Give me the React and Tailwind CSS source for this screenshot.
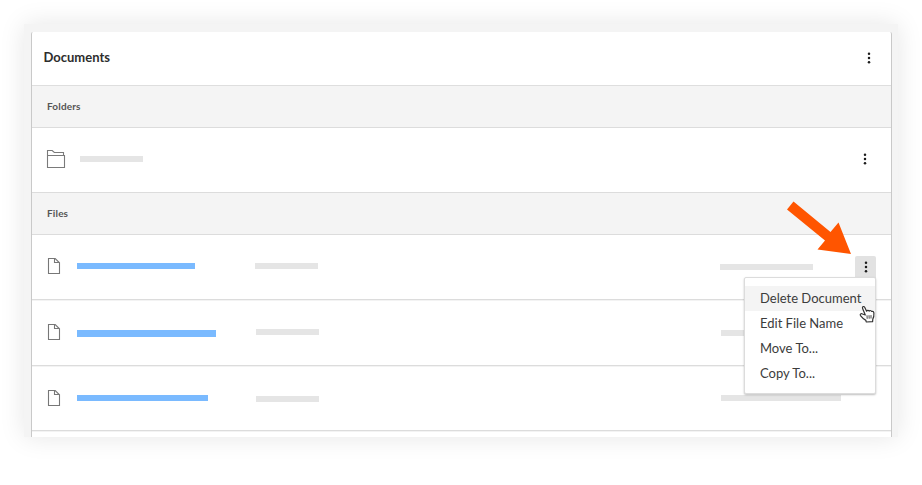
import clsx from 'clsx';

const files = [
  { row: 'h-[65px]', icon: 'mt-[22px]', name: 'w-[118px] h-1.5 mt-7', date: 'w-[63px] ml-[59.5px] mt-7', owner: 'w-[93px] ml-[402px] mt-[29px]', open: true },
  { row: 'h-[66px]', icon: 'mt-[23px]', name: 'w-[139px] h-[7px] mt-[30px]', date: 'w-[63px] ml-10 mt-[29px]', owner: 'w-[120px] ml-[402px] mt-[30px]' },
  { row: 'h-[65px]', icon: 'mt-[23px]', name: 'w-[131px] h-1.5 mt-[29px]', date: 'w-[63px] ml-12 mt-[29.5px]', owner: 'w-[120px] ml-[402px] mt-[29px]' },
];

const menuItems = ['Delete Document', 'Edit File Name', 'Move To...', 'Copy To...'];

function Dots() {
  return (
    <svg width="4" height="12" viewBox="0 0 4 12" fill="#1c1c1c">
      <circle cx="2" cy="1.7" r="1.25" />
      <circle cx="2" cy="6" r="1.25" />
      <circle cx="2" cy="10.3" r="1.25" />
    </svg>
  );
}

function FolderIcon() {
  return (
    <svg width="20" height="20" viewBox="0 0 20 20" fill="none" stroke="#7a7a7a" strokeWidth="1.1">
      <path d="M1.5 18.5V1.5H6.2L8.3 3.5H17.5V6.5M1.5 6.5H18.5V18.5H1.5Z" />
    </svg>
  );
}

function FileIcon() {
  return (
    <svg width="14" height="18" viewBox="0 0 14 18" fill="none" stroke="#777" strokeWidth="1.1">
      <path d="M1.5 1.5H8.2L12.5 5.8V16.5H1.5ZM7.5 1.5V5.5H12.5" />
    </svg>
  );
}

function HandCursor() {
  return (
    <svg className="absolute left-[114px] top-[27px]" width="17" height="18" viewBox="0 0 17 18">
      <path
        d="M6.3 10L3.6 3.4C2.9 1.6 5 .8 5.8 2.4L7.6 6.2C8 5.1 9.6 5 10.1 6.1C10.7 5.2 12.1 5.3 12.5 6.4C13.7 6 14.8 6.6 14.9 8.1C15.1 10.8 14.8 12.4 13.8 14.1L13.6 16.6L7.2 17L6.9 15.4C5 14.4 3.4 13 1.5 10.6C.6 9.1 2.2 8 3.5 9Z"
        fill="#fff"
        stroke="#333"
        strokeWidth="1.2"
        strokeLinejoin="round"
      />
      <path d="M8 10.3L8.2 13.8M10 10.2L10.2 13.7M12 10.1V13.5" stroke="#333" strokeWidth=".9" />
    </svg>
  );
}

function SectionTitle({ children }) {
  return (
    <div className="flex h-[42px] items-center border-b border-[#dcdcdc] bg-[#f4f4f4] pb-px pl-[15px] text-[10px] font-bold tracking-[0.15px] text-[#555]">
      {children}
    </div>
  );
}

function Menu() {
  return (
    <div className="absolute right-0 top-[21px] z-10 h-[117px] w-[132px] rounded-xs border border-[#dcdcdc] bg-white pt-2 shadow-[0_1px_2px_rgba(0,0,0,0.25)]">
      {menuItems.map((item, i) => (
        <div key={item} className={clsx('flex h-[25px] items-center whitespace-nowrap pl-[15px] text-[13px] text-[#3c3c3c]', i === 0 && 'bg-[#f4f4f4]')}>
          {item}
        </div>
      ))}
      <HandCursor />
    </div>
  );
}

function FileRow({ file }) {
  return (
    <div className={clsx('flex border-b border-[#dcdcdc] shadow-[0_1px_0_#f3f3f3]', file.row)}>
      <div className={clsx('ml-[15px] w-[30px]', file.icon)}>
        <FileIcon />
      </div>
      <div className={clsx('shrink-0 bg-[#7abaff]', file.name)} />
      <div className={clsx('h-1.5 shrink-0 bg-[#e5e5e5]', file.date)} />
      <div className={clsx('h-1.5 shrink-0 bg-[#e5e5e5]', file.owner)} />
      {file.open && (
        <div className="relative ml-auto mr-[15px] mt-[21px] flex h-[22px] w-[21px] items-center justify-center rounded-t-xs bg-[#e2e2e2]">
          <Dots />
          <Menu />
        </div>
      )}
    </div>
  );
}

export default function App() {
  return (
    <div className="h-[485px] w-[922px] overflow-hidden bg-white px-6 pt-6 font-['Lato',sans-serif]">
      <div className="relative h-[413px] w-[874px] bg-[#f4f4f4] px-[7px] pt-2 shadow-[0_0_24px_rgba(0,0,0,0.1)]">
        <div className="h-[405px] w-[861px] overflow-hidden rounded-t-xs border-x border-[#c9c9c9] bg-white">
          <div className="flex h-[54px] items-center justify-between border-b border-[#dedede] pb-px pl-[11.5px] pr-5">
            <h1 className="text-[13px] font-bold text-[#2d2d2d]">Documents</h1>
            <Dots />
          </div>
          <SectionTitle>Folders</SectionTitle>
          <div className="flex h-[65px] items-center border-b border-[#dcdcdc] pb-0.5 pr-6">
            <div className="ml-3.5 w-[33.5px]">
              <FolderIcon />
            </div>
            <div className="h-1.5 w-[63px] bg-[#e5e5e5]" />
            <div className="ml-auto">
              <Dots />
            </div>
          </div>
          <SectionTitle>Files</SectionTitle>
          {files.map((file, i) => (
            <FileRow key={i} file={file} />
          ))}
        </div>
        <svg className="absolute left-[760px] top-44" width="70" height="58" viewBox="0 0 70 58" fill="#ff5500">
          <path d="M9.5 1.5L46.5 32L54.5 22.5L67 54L33.5 49.5L41 40.5L3 9.5Z" />
        </svg>
      </div>
    </div>
  );
}
